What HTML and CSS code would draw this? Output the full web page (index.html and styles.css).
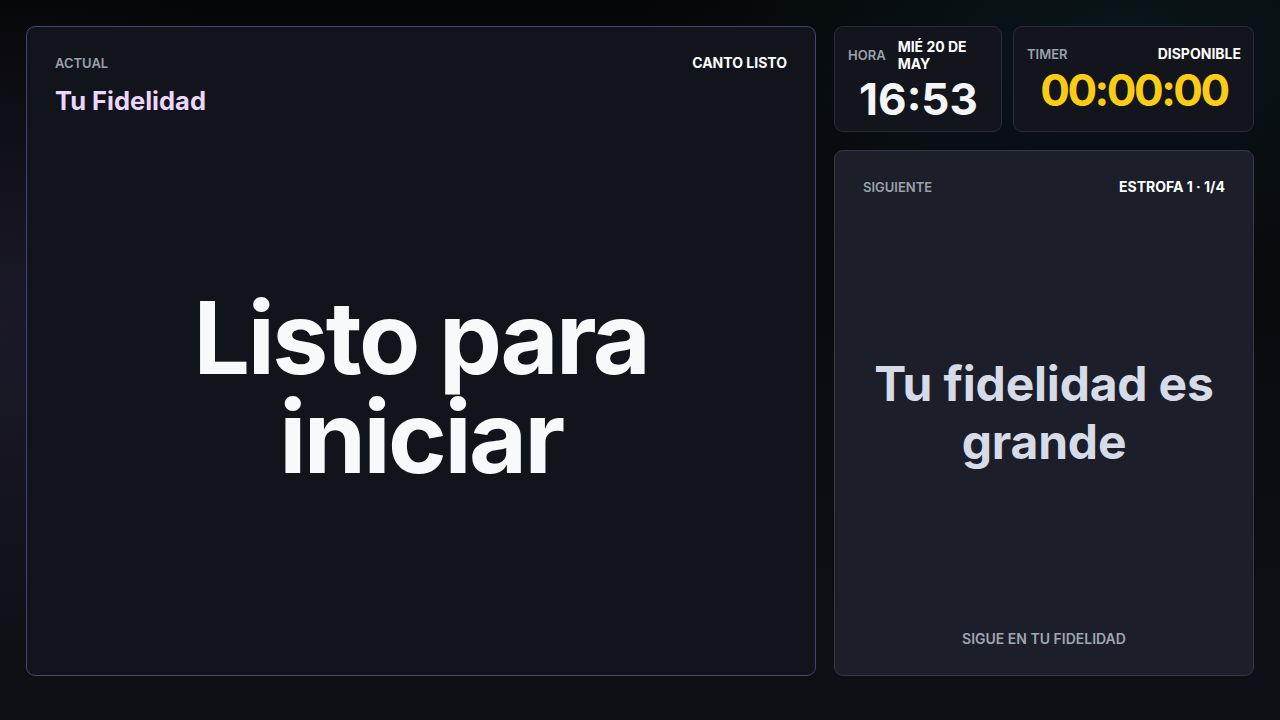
FILE: index.html
```html
<!DOCTYPE html>
<html lang="es">
<head>
  <meta charset="UTF-8" />
  <meta name="viewport" content="width=device-width, initial-scale=1.0" />
  <title>Pantalla de escenario</title>
  <link rel="stylesheet" href="styles.css">
</head>
<body>
  <main class="stage">
    <section class="panel current">
      <div class="panel-head">
        <div>
          <div class="label">Actual</div>
          <h1 class="song-title">Tu Fidelidad</h1>
        </div>
        <div class="status">Canto listo</div>
      </div>
      <div class="current-body">
        <p class="current-text">Listo para<br>iniciar</p>
      </div>
    </section>

    <aside class="side">
      <div class="top-row">
        <div class="mini-card">
          <div class="mini-head clock-head">
            <span class="label">Hora</span>
            <span class="date">Mié 20 de may</span>
          </div>
          <div class="clock">16:53</div>
        </div>
        <div class="mini-card">
          <div class="mini-head timer-head">
            <span class="label">Timer</span>
            <span class="status">Disponible</span>
          </div>
          <div class="timer">00:00:00</div>
        </div>
      </div>

      <section class="panel next">
        <div class="panel-head">
          <div class="label">Siguiente</div>
          <div class="status">Estrofa 1 · 1/4</div>
        </div>
        <div class="next-body">
          <p class="next-text">Tu fidelidad es<br>grande</p>
        </div>
        <div class="next-foot">Sigue en Tu Fidelidad</div>
      </section>
    </aside>
  </main>
</body>
</html>
```

FILE: styles.css
```css
* {
  box-sizing: border-box;
}

html, body {
  height: 100%;
}

body {
  margin: 0;
  font-family: 'Inter', 'Roboto', sans-serif;
  color: #f8f9fb;
  background:
    radial-gradient(ellipse 45% 70% at 0% 45%, rgba(40, 36, 60, 0.55), transparent 70%),
    radial-gradient(ellipse 50% 45% at 88% 5%, rgba(12, 32, 36, 0.6), transparent 75%),
    linear-gradient(180deg, #050608 0%, #0c0d12 60%, #0f1015 100%);
  overflow: hidden;
}

.stage {
  display: grid;
  grid-template-columns: 790px 420px;
  gap: 18px;
  height: 720px;
  padding: 26px 26px 44px;
}

.panel {
  border-radius: 9px;
  padding: 28px;
  display: flex;
  flex-direction: column;
}

.current {
  background: #12141b;
  border: 1px solid #4a4274;
}

.panel-head {
  display: flex;
  justify-content: space-between;
  align-items: flex-start;
}

.label {
  font-size: 13px;
  line-height: 16px;
  font-weight: 600;
  color: #9aa1ad;
  text-transform: uppercase;
}

.status {
  font-size: 14px;
  line-height: 16px;
  font-weight: 700;
  color: #ffffff;
  text-transform: uppercase;
}

.song-title {
  margin: 15px 0 0;
  font-size: 25.5px;
  line-height: 30px;
  font-weight: 700;
  color: #ead7fb;
}

.current-body {
  flex: 1;
  display: flex;
  align-items: center;
  justify-content: center;
  padding-top: 10px;
}

.current-text {
  margin: 0;
  text-align: center;
  font-size: 100px;
  line-height: 99px;
  font-weight: 700;
  letter-spacing: -0.025em;
  color: #f8f9fb;
}

.side {
  display: flex;
  flex-direction: column;
  gap: 18px;
  min-height: 0;
}

.top-row {
  display: grid;
  grid-template-columns: 168px 241px;
  gap: 11px;
  height: 106px;
}

.mini-card {
  background: #12151c;
  border: 1px solid #2a2d35;
  border-radius: 9px;
  padding: 0 12px 0 13px;
  display: flex;
  flex-direction: column;
  justify-content: center;
  gap: 6px;
}

.mini-head {
  display: flex;
  align-items: center;
}

.clock-head {
  gap: 12px;
}

.timer-head {
  justify-content: space-between;
}

.date {
  font-size: 14px;
  line-height: 17px;
  font-weight: 700;
  color: #ffffff;
  text-transform: uppercase;
}

.clock, .timer {
  font-size: 44px;
  line-height: 44px;
  font-weight: 700;
  text-align: center;
}

.clock {
  color: #f4f5f7;
  margin-top: -1px;
}

.timer {
  color: #facc15;
  letter-spacing: -2.5px;
}

.next {
  flex: 1;
  background: #1c1f29;
  border: 1px solid #363944;
}

.next-body {
  flex: 1;
  display: flex;
  align-items: center;
  justify-content: center;
}

.next-text {
  margin: 0;
  text-align: center;
  font-size: 48px;
  line-height: 58px;
  font-weight: 700;
  letter-spacing: -0.2px;
  color: #d6dbe8;
}

.next-foot {
  text-align: center;
  font-size: 14px;
  line-height: 16px;
  font-weight: 600;
  color: #9fa6b4;
  text-transform: uppercase;
}
```
